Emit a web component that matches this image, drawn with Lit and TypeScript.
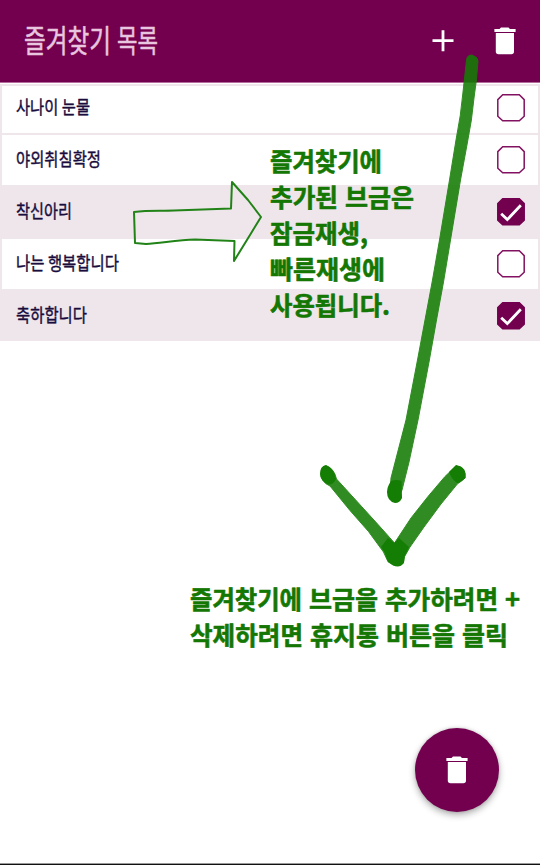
import { LitElement, html, svg, css } from "lit";
import { customElement, property } from "lit/decorators.js";

type Word = [text: string, x: number, width: number];

// Handwriting-like label: every word is condensed to its own width.
@customElement("fitted-text")
class FittedText extends LitElement {
  @property({ attribute: false }) words: Word[] = [];
  @property({ type: Number }) width = 0;
  @property({ type: Number }) height = 0;
  @property({ type: Number }) baseline = 0;

  static styles = css`
    :host { display: block; }
    svg { display: block; overflow: visible; }
    text {
      font-family: "Noto Sans CJK KR", "Noto Sans", sans-serif;
      fill: currentColor;
      stroke: currentColor;
      stroke-width: var(--ink, 0);
      stroke-linejoin: round;
    }
  `;

  render() {
    return html`<svg width=${this.width} height=${this.height}>
      ${this.words.map(([t, x, w]) => svg`<text x=${x} y=${this.baseline} textLength=${w} lengthAdjust="spacingAndGlyphs">${t}</text>`)}
    </svg>`;
  }
}

@customElement("trash-icon")
class TrashIcon extends LitElement {
  static styles = css`
    :host { display: block; width: 22px; height: 28px; }
    svg { display: block; }
  `;
  render() {
    return html`<svg width="22" height="28" viewBox="0 0 22 28" fill="#fff">
      <path d="M0.4 2H5.5L7 0.6H14.5L16 2H21.6V4.9H0.4Z" />
      <path d="M1.8 5.9H20V24.5Q20 27.2 17.3 27.2H4.5Q1.8 27.2 1.8 24.5Z" />
    </svg>`;
  }
}

@customElement("check-box")
class CheckBox extends LitElement {
  @property({ type: Boolean }) checked = false;
  static styles = css`
    :host { display: block; width: 28px; height: 28px; }
    svg { display: block; overflow: visible; }
    .box { fill: #fff; stroke: #821261; stroke-width: 1.5; }
    .on { fill: #72004e; stroke: #72004e; }
    .tick { fill: none; stroke: #fff; stroke-width: 2.8; }
  `;
  render() {
    return html`<svg width="28" height="28" viewBox="0 0 28 28">
      <path class="box ${this.checked ? "on" : ""}" d="M5.7 0.8H22.3L27.2 5.6V22.2L22.3 26.8H5.7L0.8 22.2V5.6Z" />
      ${this.checked ? svg`<path class="tick" d="M4.2 15.8L10.3 21.6L23.8 7.3" />` : null}
    </svg>`;
  }
}

@customElement("app-root")
class AppRoot extends LitElement {
  private rows: { words: Word[]; checked: boolean }[] = [
    { words: [["사나이 눈물", 0, 74]], checked: false },
    { words: [["야외취침확정", 0, 85]], checked: false },
    { words: [["착신아리", 0, 56]], checked: true },
    { words: [["나는 행복합니다", 0, 103]], checked: false },
    { words: [["축하합니다", 0, 71]], checked: true },
  ];

  private usage: Word[][] = [
    [["즐겨찾기에", 0, 112]],
    [["추가된", 0, 68], ["브금은", 75, 69]],
    [["잠금재생,", 0, 98]],
    [["빠른재생에", 0, 115]],
    [["사용됩니다.", 0, 120]],
  ];

  private actions: Word[][] = [
    [["즐겨찾기에", 0, 112], ["브금을", 119, 69], ["추가하려면", 195, 113], ["+", 315, 15]],
    [["삭제하려면", 0, 113], ["휴지통", 120, 69], ["버튼을", 196, 69], ["클릭", 272, 46]],
  ];

  static styles = css`
    :host {
      display: block;
      position: relative;
      width: 540px;
      height: 865px;
      overflow: hidden;
      background: #fff;
    }
    .page { display: flex; flex-direction: column; height: 865px; }
    header {
      display: flex;
      align-items: center;
      box-sizing: border-box;
      height: 83px;
      padding: 0 24px;
      background: #73004f;
      border-bottom: 1px solid #b26b9b;
      color: #e8c6df;
    }
    .title { font-size: 31px; margin-right: auto; --ink: 0.5px; }
    .plus { margin-right: 40px; display: block; }
    .list { display: flex; flex-direction: column; padding-top: 1px; }
    .row {
      box-sizing: border-box;
      display: flex;
      align-items: center;
      justify-content: space-between;
      height: 52px;
      padding: 0 13px 0 14px;
      border: 2px solid #efe6eb;
      border-bottom-width: 0;
      color: #1a0d3e;
      font-size: 18.5px;
      --ink: 0.4px;
    }
    .row.selected { background: #efe6eb; }
    .row:first-child { height: 49px; padding-bottom: 3px; }
    .row:last-child { padding-bottom: 1px; }
    .foot { margin-top: auto; height: 2px; background: #111; border-top: 1px solid #999; box-sizing: border-box; }
    .drawing { position: absolute; inset: 0; }
    .ink { fill: #147d04; }
    .marker { opacity: 0.88; }
    .wash { fill: #147d04; stroke: #147d04; stroke-width: 1; stroke-linejoin: round; }
    .outline { fill: none; stroke: #218317; stroke-width: 2; stroke-linejoin: round; }
    .note {
      position: absolute;
      color: #147704;
      font-size: 25.5px;
      font-weight: 700;
      --ink: 0.6px;
    }
    .usage { left: 270px; top: 144px; }
    .actions { left: 190px; top: 582px; }
    .fab {
      position: absolute;
      left: 415px;
      top: 728px;
      width: 84px;
      height: 84px;
      border-radius: 50%;
      display: flex;
      align-items: center;
      justify-content: center;
      background: #73004f;
      box-shadow: 0 3px 7px rgba(0, 0, 0, 0.32), 0 0 3px rgba(0, 0, 0, 0.15);
    }
  `;

  private lines(lines: Word[][], width: number) {
    return lines.map((words) => html`<fitted-text .words=${words} .width=${width} .height=${36} .baseline=${26.8}></fitted-text>`);
  }

  render() {
    return html`
      <div class="page">
        <header>
          <fitted-text class="title" .words=${[["즐겨찾기", 0, 87], ["목록", 93, 41]] as Word[]} .width=${134} .height=${40} .baseline=${31}></fitted-text>
          <svg class="plus" width="22" height="22" viewBox="0 0 22 22"><path d="M0.5 10.7H21.5M11 0.2V21.2" stroke="#fff" stroke-width="2.8" /></svg>
          <trash-icon></trash-icon>
        </header>
        <main class="list">
          ${this.rows.map((r) => html`
            <div class="row ${r.checked ? "selected" : ""}">
              <fitted-text .words=${r.words} .width=${110} .height=${24} .baseline=${18.4}></fitted-text>
              <check-box ?checked=${r.checked}></check-box>
            </div>`)}
        </main>
        <div class="foot"></div>
      </div>
      <svg class="drawing" width="540" height="865" viewBox="0 0 540 865">
        <path class="outline" d="M134 212C148 210 159 211 174 210.5L231 208.5L232 182L248 200L261 217L250 235L234 261L234.5 241L195 239.5C176 240 160 243.5 146 244L135 243Z" />
        <g class="marker">
          <path class="wash" d="M466.5 60Q467 55 472 55Q478 57 478 61Q477 79 474 98Q472 120 467.5 142L460.5 180L450.5 240L443.5 282L436.5 320L429 362L418 420L409 462L402 490Q398 502 390 492L391 478L406 420L417.5 360L425 320L432.5 280L439.5 240L449.5 180L456 140Q461 115 463 92Z" />
          <path class="wash" d="M321 474Q321 466 326 466Q334 468 336.5 479L357.5 502L378 524.5L394.5 543L411 518L428 496.5L445 476.5L456 466Q466 467 465 478Q462 481 457.5 483.8L441 504L424 527L410 547L404.5 556.7L403.5 562Q399 567 393 565L388 561.7L383.5 552L368.5 531.5L350 510.5L330 486Q321 482 321 474Z" />
        </g>
        <path class="ink" d="M391 481Q397 479 401.5 481L402 498Q400 503 395 503Q387 501 387 492Q387 487 391 481Z" />
        <path class="ink" d="M320 474Q320 466 326 465Q334 468 336 479Q334 484 329 484.5Q320 481 320 474Z" />
        <path class="ink" d="M449 472L456 465Q467 467 465.5 478Q462 481 457.5 483.3Q452 480 449 472Z" />
        <path class="ink" d="M381 547L388 538L394.5 543L399 538L409 547L404.5 556.7L404 563Q399 569 393 565L388 561.7L384.5 552Z" />
      </svg>
      <div class="note usage">${this.lines(this.usage, 160)}</div>
      <div class="note actions">${this.lines(this.actions, 335)}</div>
      <div class="fab"><trash-icon></trash-icon></div>
    `;
  }
}
